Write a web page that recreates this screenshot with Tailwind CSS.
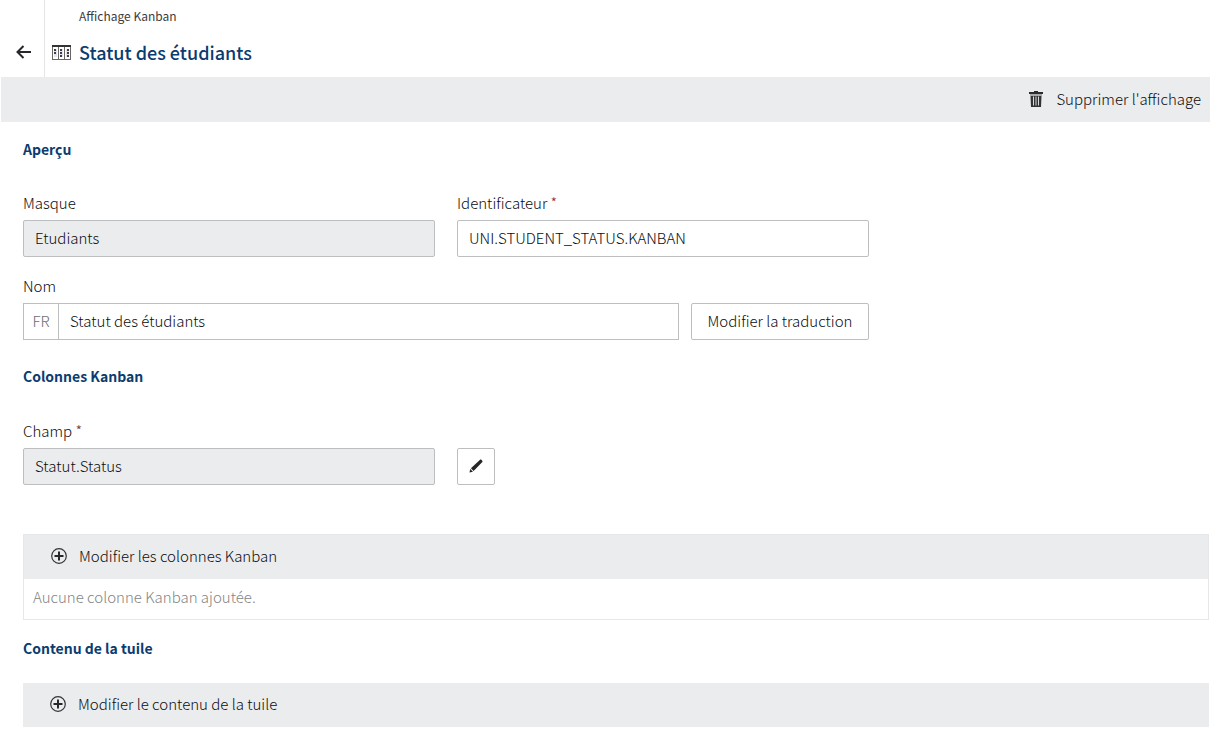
<!DOCTYPE html>
<html lang="fr">
<head>
<meta charset="utf-8">
<meta name="viewport" content="width=device-width, initial-scale=1">
<title>Statut des étudiants</title>
<script src="https://cdn.jsdelivr.net/npm/@tailwindcss/browser@4"></script>
</head>
<body class="min-h-screen bg-white font-['Noto_Sans_CJK_SC','Noto_Sans',sans-serif] text-[15px] font-light leading-6 text-[#0c0c10]">
<header class="flex h-[77px]">
  <div class="flex w-[45px] shrink-0 items-end border-r border-[#e4e5e7] pb-[17px] pl-4">
    <button type="button" aria-label="Retour" class="h-4 w-4 text-[#26262b]">
      <svg viewBox="0 0 16 16" class="h-4 w-4" fill="none" stroke="currentColor" stroke-width="2"><path d="M15 8H1.500M7.500 2 1.500 8l6 6"/></svg>
    </button>
  </div>
  <div class="pl-[7px] pt-[6px]">
    <p class="pl-[27px] text-xs font-normal leading-5 text-[#3c3c40]">Affichage Kanban</p>
    <div class="flex items-center gap-2 pt-[11px]">
      <svg viewBox="0 0 19 15" class="h-[15px] w-[19px]" fill="none" shape-rendering="crispEdges">
        <path d="M.5.5h18v14H.5zM6.500 2v12M12.500 2v12" stroke="#6b6662"/>
        <path d="M0 0h19v2H0z" fill="#333336"/>
        <path d="M2 4h3v8H2zM8 4h3v8H8zM14 4h3v8h-3z" fill="#e3e3ea"/>
        <path d="M2 4h2v2H2zM2 7h2v2H2zM8 4h2v2H8zM8 7h2v2H8zM8 10h2v2H8zM15 4h2v2h-2zM15 7h2v2h-2zM15 10h2v2h-2z" fill="#3c3c4c"/>
      </svg>
      <h1 class="text-[18px] font-medium leading-[30px] text-[#0b3c6f]">Statut des étudiants</h1>
    </div>
  </div>
</header>
<div class="ml-px flex h-[45px] items-center justify-end bg-[#ebeced] pb-px pr-[9px]">
  <button type="button" class="flex items-center gap-[13px]">
    <svg viewBox="0 0 14 16" class="h-4 w-[14px]" fill="none"><path d="M5 0h4v1h5v2H0V1h5z" fill="#2b2b2e"/><path d="M1 3h12v2H1z" fill="#a9a9ac"/><path d="M1.500 5h11L12 16H2z" fill="#333336"/><path d="M4.500 5.500v9M7 5.500v9M9.500 5.500v9" stroke="#d8d9da"/></svg>
    Supprimer l'affichage
  </button>
</div>
<main class="pb-1 pl-[23px] pr-px pt-[15px]">
  <h2 class="text-sm/6 font-bold text-[#0b3c6f]">Aperçu</h2>
  <div class="grid max-w-[846px] grid-cols-2 gap-x-[22px] gap-y-[17px] pt-[30px]">
    <div class="flex flex-col gap-[5px]">
      <label for="masque">Masque</label>
      <input id="masque" readonly value="Etudiants" class="h-[37px] w-full rounded-xs border border-[#bcbec0] bg-[#ebeced] px-[11px] pb-0.5">
    </div>
    <div class="flex flex-col gap-[5px]">
      <label for="ident">Identificateur <span class="text-[#a02830]">*</span></label>
      <input id="ident" value="UNI.STUDENT_STATUS.KANBAN" class="h-[37px] w-full rounded-xs border border-[#bcbec0] bg-white px-[11px] pb-0.5">
    </div>
    <div class="col-span-2 flex flex-col gap-[5px]">
      <label for="nom">Nom</label>
      <div class="flex h-[37px] gap-3">
        <div class="flex flex-1 border border-[#bcbec0]">
          <span class="flex w-[35px] items-center justify-center border-r border-[#bcbec0] pb-0.5 text-[#6c6e71]">FR</span>
          <input id="nom" value="Statut des étudiants" class="min-w-0 flex-1 px-[11px] pb-0.5">
        </div>
        <button type="button" class="w-[178px] rounded-xs border border-[#bcbec0] pb-0.5">Modifier la traduction</button>
      </div>
    </div>
  </div>
  <h2 class="pt-6 text-sm/6 font-bold text-[#0b3c6f]">Colonnes Kanban</h2>
  <div class="flex max-w-[846px] items-end gap-[22px] pt-[31px]">
    <div class="flex w-[412px] flex-col gap-[5px]">
      <label for="champ">Champ <span class="text-[#7a3038]">*</span></label>
      <input id="champ" readonly value="Statut.Status" class="h-[37px] w-full rounded-xs border border-[#bcbec0] bg-[#ebeced] px-[11px] pb-0.5">
    </div>
    <button type="button" aria-label="Modifier le champ" class="flex h-[37px] w-[38px] items-center justify-center rounded-xs border border-[#bcbec0] pb-0.5">
      <svg viewBox="0 0 14 14" class="h-[14px] w-[14px]" fill="#26262b"><path d="m.5 13.500.7-3.500 2.800 2.800zM1.900 9.300 10.800.9c.5-.5 1.300-.5 1.800 0l.5.5c.5.5.5 1.300 0 1.800l-8.500 8.900z"/></svg>
    </button>
  </div>
  <section class="mt-[49px] border border-[#e6e7e8]">
    <div class="flex h-11 items-center bg-[#ebeced] pb-0.5 pl-[27px]">
      <button type="button" class="flex items-center gap-3">
        <svg viewBox="0 0 16 16" class="h-4 w-4" fill="none" stroke="#333336"><circle cx="8" cy="8" r="7.300" stroke-width="1.200"/><path d="M8 3.500v9M3.500 8h9" stroke-width="2" stroke="#26262b"/></svg>
        Modifier les colonnes Kanban
      </button>
    </div>
    <p class="px-[9px] pb-[10px] pt-[6px] text-[#848484]">Aucune colonne Kanban ajoutée.</p>
  </section>
  <h2 class="pt-4 text-sm/6 font-bold text-[#0b3c6f]">Contenu de la tuile</h2>
  <div class="mt-[23px] flex h-11 items-center bg-[#ebeced] pb-0.5 pl-[27px]">
    <button type="button" class="flex items-center gap-3">
      <svg viewBox="0 0 16 16" class="h-4 w-4" fill="none" stroke="#333336"><circle cx="8" cy="8" r="7.300" stroke-width="1.200"/><path d="M8 3.500v9M3.500 8h9" stroke-width="2" stroke="#26262b"/></svg>
      Modifier le contenu de la tuile
    </button>
  </div>
</main>
</body>
</html>
